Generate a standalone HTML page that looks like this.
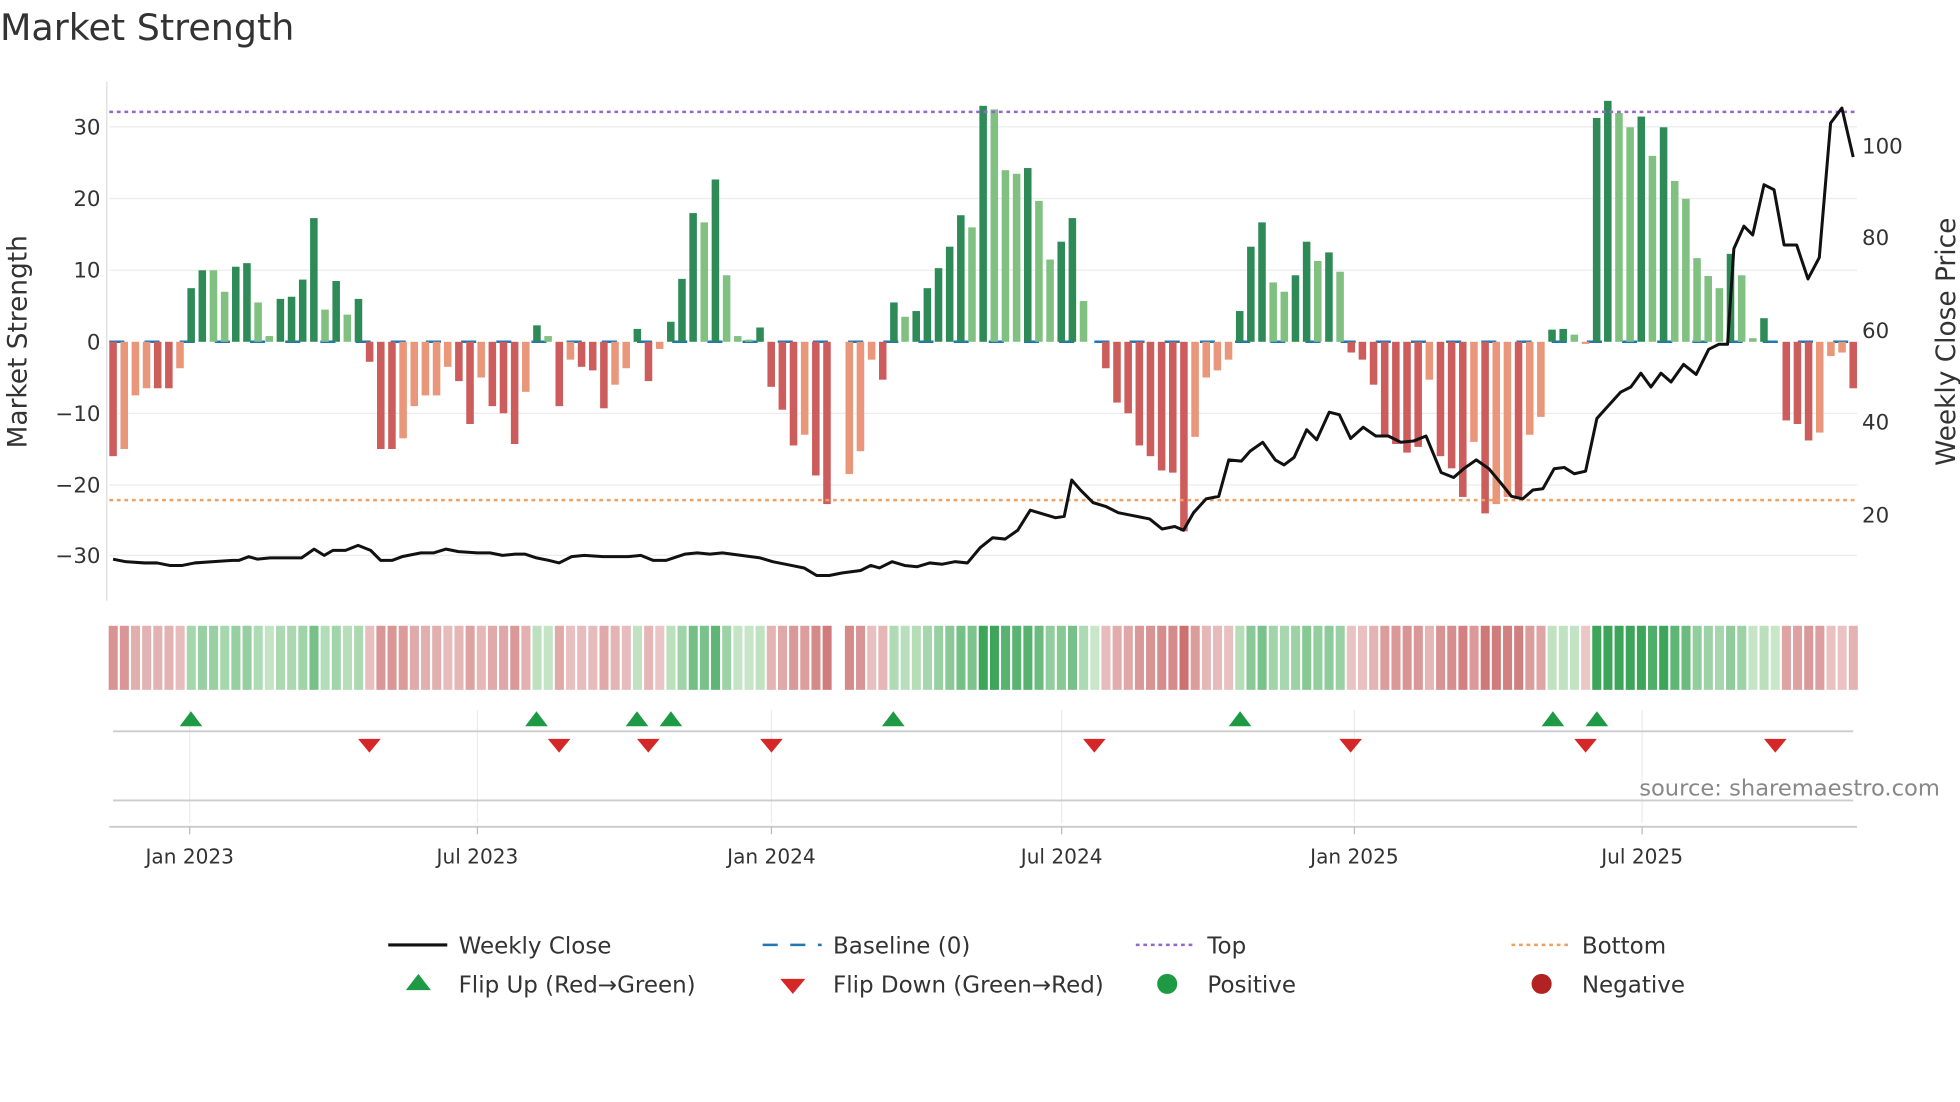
<!DOCTYPE html>
<html><head><meta charset="utf-8"><style>
html,body{margin:0;padding:0;background:#fff;width:1960px;height:1102px;overflow:hidden}
svg{display:block;font-family:"DejaVu Sans","Liberation Sans",sans-serif}
</style></head><body>
<svg id="s" width="1960" height="1102" viewBox="0 0 1560 877" preserveAspectRatio="none" xmlns="http://www.w3.org/2000/svg">
<rect width="1560" height="877" fill="#fff"/>
<text x="0" y="32" font-size="29" fill="#333">Market Strength</text>
<g stroke="#ececec" stroke-width="1">
<line x1="87" x2="1478" y1="101" y2="101"/><line x1="87" x2="1478" y1="158" y2="158"/><line x1="87" x2="1478" y1="215" y2="215"/><line x1="87" x2="1478" y1="329" y2="329"/><line x1="87" x2="1478" y1="386" y2="386"/><line x1="87" x2="1478" y1="442" y2="442"/>
<line x1="151" x2="151" y1="565" y2="655"/><line x1="380" x2="380" y1="565" y2="655"/><line x1="614" x2="614" y1="565" y2="655"/><line x1="845" x2="845" y1="565" y2="655"/><line x1="1078" x2="1078" y1="565" y2="655"/><line x1="1307" x2="1307" y1="565" y2="655"/>
</g>
<line x1="85" x2="85" y1="65" y2="478" stroke="#ddd"/>
<g font-size="17" fill="#333" text-anchor="end">
<text x="80" y="107">30</text><text x="80" y="164">20</text><text x="80" y="221">10</text><text x="80" y="278">0</text><text x="80" y="335">−10</text><text x="80" y="392">−20</text><text x="80" y="448">−30</text>
</g>
<g font-size="17" fill="#333">
<text x="1482" y="122">100</text><text x="1482" y="195">80</text><text x="1482" y="269">60</text><text x="1482" y="342">40</text><text x="1482" y="416">20</text>
</g>
<text transform="translate(21,272) rotate(-90)" font-size="21" fill="#333" text-anchor="middle">Market Strength</text>
<text transform="translate(1556,272) rotate(-90)" font-size="21" fill="#333" text-anchor="middle">Weekly Close Price</text>
<line x1="87" x2="1478" y1="272" y2="272" stroke="#1f77b4" stroke-width="2" stroke-dasharray="12,16"/>
<g id="bars"></g>
<line x1="87" x2="1478" y1="89" y2="89" stroke="#9467d0" stroke-width="2" stroke-dasharray="3,3"/>
<line x1="87" x2="1478" y1="398" y2="398" stroke="#f0a060" stroke-width="2" stroke-dasharray="3,3"/>
<polyline id="price" fill="none" stroke="#111" stroke-width="2.4" stroke-linejoin="round"/>
<g id="heat"></g>
<line x1="90" x2="1475" y1="582" y2="582" stroke="#ccc" stroke-width="1.5"/>
<line x1="90" x2="1475" y1="637" y2="637" stroke="#ccc" stroke-width="1.5"/>
<line x1="87" x2="1478" y1="658" y2="658" stroke="#ccc" stroke-width="1.5"/>
<g id="marks"></g>
<g stroke="#bbb"><line x1="151" x2="151" y1="658" y2="664"/><line x1="380" x2="380" y1="658" y2="664"/><line x1="614" x2="614" y1="658" y2="664"/><line x1="845" x2="845" y1="658" y2="664"/><line x1="1078" x2="1078" y1="658" y2="664"/><line x1="1307" x2="1307" y1="658" y2="664"/></g>
<g font-size="16" fill="#333" text-anchor="middle">
<text x="151" y="687">Jan 2023</text><text x="380" y="687">Jul 2023</text><text x="614" y="687">Jan 2024</text><text x="845" y="687">Jul 2024</text><text x="1078" y="687">Jan 2025</text><text x="1307" y="687">Jul 2025</text>
</g>
<text x="1544" y="633" font-size="18" fill="#888" text-anchor="end">source: sharemaestro.com</text>
<g font-size="18.3" fill="#333">
<line x1="309" x2="356" y1="752" y2="752" stroke="#111" stroke-width="2.5"/><text x="365" y="759">Weekly Close</text>
<line x1="607" x2="654" y1="752" y2="752" stroke="#1f77b4" stroke-width="2" stroke-dasharray="12,10"/><text x="663" y="759">Baseline (0)</text>
<line x1="904" x2="951" y1="752" y2="752" stroke="#9467d0" stroke-width="2" stroke-dasharray="3,3"/><text x="961" y="759">Top</text>
<line x1="1203" x2="1250" y1="752" y2="752" stroke="#f0a060" stroke-width="2" stroke-dasharray="3,3"/><text x="1259" y="759">Bottom</text>
<polygon points="323,788 343,788 333,775" fill="#1e9a45"/><text x="365" y="790">Flip Up (Red→Green)</text>
<polygon points="621,779 641,779 631,791" fill="#d62728"/><text x="663" y="790">Flip Down (Green→Red)</text>
<circle cx="929" cy="783" r="8" fill="#1e9a45"/><text x="961" y="790">Positive</text>
<circle cx="1227" cy="783" r="8" fill="#b22222"/><text x="1259" y="790">Negative</text>
</g>
</svg>
<script>
var v=[[-16,1],[-15,0],[-7.5,0],[-6.5,0],[-6.5,1],[-6.5,1],[-3.7,0],[7.5,1],[10,1],[10,0],[7,0],[10.5,1],[11,1],[5.5,0],[0.8,0],[6,1],[6.3,1],[8.7,1],[17.3,1],[4.5,0],[8.5,1],[3.8,0],[6,1],[-2.8,1],[-15,1],[-15,1],[-13.5,0],[-9,0],[-7.5,0],[-7.5,0],[-3.5,0],[-5.5,1],[-11.5,1],[-5,0],[-9,1],[-10,1],[-14.3,1],[-7,0],[2.3,1],[0.8,0],[-9,1],[-2.5,0],[-3.5,1],[-4,1],[-9.3,1],[-6,0],[-3.7,0],[1.8,1],[-5.5,1],[-1,0],[2.8,1],[8.8,1],[18,1],[16.7,0],[22.7,1],[9.3,0],[0.8,0],[0.3,0],[2,1],[-6.3,1],[-9.5,1],[-14.5,1],[-13,0],[-18.7,1],[-22.7,1],[0,0],[-18.5,0],[-15.3,0],[-2.5,0],[-5.3,1],[5.5,1],[3.5,0],[4.3,1],[7.5,1],[10.3,1],[13.3,1],[17.7,1],[16,0],[33,1],[32.5,0],[24,0],[23.5,0],[24.3,1],[19.7,0],[11.5,0],[14,1],[17.3,1],[5.7,0],[0,0],[-3.7,1],[-8.5,1],[-10,1],[-14.5,1],[-16,1],[-18,1],[-18.3,1],[-26.5,1],[-13.3,0],[-5,0],[-4,0],[-2.5,0],[4.3,1],[13.3,1],[16.7,1],[8.3,0],[7,0],[9.3,1],[14,1],[11.3,0],[12.5,1],[9.8,0],[-1.5,1],[-2.5,1],[-6,1],[-13.3,1],[-14.3,1],[-15.5,1],[-14.7,1],[-5.3,0],[-16,1],[-17.7,1],[-21.7,1],[-14,0],[-24,1],[-22.7,0],[-21.7,0],[-22,1],[-13,0],[-10.5,0],[1.7,1],[1.8,1],[1,0],[-0.3,0],[31.3,1],[33.7,1],[32,0],[30,0],[31.5,1],[26,0],[30,1],[22.5,0],[20,0],[11.7,0],[9.2,0],[7.5,0],[12.3,1],[9.3,0],[0.5,0],[3.3,1],[0,0],[-11,1],[-11.5,1],[-13.8,1],[-12.7,0],[-2,0],[-1.5,0],[-6.5,1]];
var ns="http://www.w3.org/2000/svg",b=document.getElementById("bars"),h=document.getElementById("heat");
function el(t,a,p){var e=document.createElementNS(ns,t);for(var k in a)e.setAttribute(k,a[k]);p.appendChild(e);return e}
var step=(1475-90)/(v.length-1);
v.forEach(function(d,i){var x=90+i*step,val=d[0],y0=272,y1=272-val*5.69;
 var c=val>=0?(d[1]?"#2e8b57":"#80c080"):(d[1]?"#cd5c5c":"#e9967a");
 if(Math.abs(val)>0.2)el("rect",{x:x-3,y:Math.min(y0,y1),width:6,height:Math.abs(y1-y0),fill:c},b);
 if(i==65)return;
 var m=Math.min(Math.abs(val)/30,1),col;
 if(val>=0){col="rgb("+Math.round(200-140*m)+","+Math.round(230-65*m)+","+Math.round(200-110*m)+")"}
 else{col="rgb("+Math.round(235-35*m)+","+Math.round(200-100*m)+","+Math.round(200-100*m)+")"}
 el("rect",{x:x-3.5,y:498,width:7.2,height:51,fill:col},h);
});
var p=[[90,445],[100,447],[115,448],[125,448],[135,450],[145,450],[155,448],[170,447],[185,446],[190,446],[198,443],[205,445],[215,444],[225,444],[240,444],[250,437],[258,442],[265,438],[275,438],[285,434],[295,438],[303,446],[312,446],[320,443],[335,440],[345,440],[355,437],[365,439],[380,440],[390,440],[400,442],[410,441],[418,441],[427,444],[437,446],[445,448],[455,443],[465,442],[480,443],[500,443],[510,442],[520,446],[530,446],[545,441],[555,440],[565,441],[575,440],[590,442],[605,444],[615,447],[630,450],[640,452],[650,458],[660,458],[670,456],[685,454],[693,450],[700,452],[710,447],[720,450],[730,451],[740,448],[750,449],[760,447],[770,448],[780,436],[790,428],[800,429],[810,422],[820,406],[830,409],[840,412],[847,411],[853,382],[860,390],[870,400],[880,403],[890,408],[900,410],[915,413],[925,421],[935,419],[942,422],[950,408],[960,397],[970,395],[978,366],[988,367],[995,359],[1005,352],[1015,366],[1022,370],[1030,364],[1040,342],[1048,350],[1058,328],[1066,330],[1075,349],[1085,340],[1095,347],[1105,347],[1115,352],[1125,351],[1135,347],[1147,376],[1157,380],[1165,373],[1175,366],[1185,373],[1195,385],[1203,395],[1212,397],[1220,390],[1228,389],[1237,373],[1245,372],[1253,377],[1262,375],[1271,333],[1280,323],[1290,312],[1298,308],[1306,297],[1314,308],[1322,297],[1330,304],[1340,290],[1350,298],[1360,278],[1368,274],[1375,274],[1380,198],[1388,180],[1395,187],[1404,147],[1412,151],[1420,195],[1430,195],[1439,222],[1448,205],[1457,98],[1466,86],[1475,125]];
document.getElementById("price").setAttribute("points",p.map(function(q){return q.join(",")}).join(" "));
var mk=document.getElementById("marks");
[152,427,507,534,711,987,1236,1271].forEach(function(x){el("polygon",{points:(x-9)+",578 "+(x+9)+",578 "+x+",566",fill:"#1e9a45"},mk)});
[294,445,516,614,871,1075,1262,1413].forEach(function(x){el("polygon",{points:(x-9)+",588 "+(x+9)+",588 "+x+",599",fill:"#d62728"},mk)});
</script>
</body></html>
